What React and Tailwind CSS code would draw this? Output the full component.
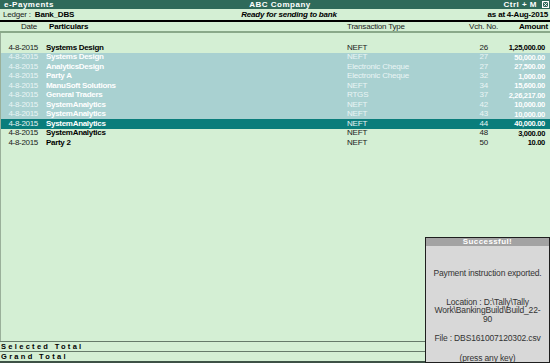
import React from 'react';

const rows = [
  { date: '4-8-2015', name: 'Systems Design', type: 'NEFT', vch: '26', amount: '1,25,000.00', state: 'normal' },
  { date: '4-8-2015', name: 'Systems Design', type: 'NEFT', vch: '27', amount: '50,000.00', state: 'selected' },
  { date: '4-8-2015', name: 'AnalyticsDesign', type: 'Electronic Cheque', vch: '27', amount: '27,500.00', state: 'selected' },
  { date: '4-8-2015', name: 'Party A', type: 'Electronic Cheque', vch: '32', amount: '1,000.00', state: 'selected' },
  { date: '4-8-2015', name: 'ManuSoft Solutions', type: 'NEFT', vch: '34', amount: '15,600.00', state: 'selected' },
  { date: '4-8-2015', name: 'General Traders', type: 'RTGS', vch: '37', amount: '2,26,217.00', state: 'selected' },
  { date: '4-8-2015', name: 'SystemAnalytics', type: 'NEFT', vch: '42', amount: '10,000.00', state: 'selected' },
  { date: '4-8-2015', name: 'SystemAnalytics', type: 'NEFT', vch: '43', amount: '10,000.00', state: 'selected' },
  { date: '4-8-2015', name: 'SystemAnalytics', type: 'NEFT', vch: '44', amount: '40,000.00', state: 'current' },
  { date: '4-8-2015', name: 'SystemAnalytics', type: 'NEFT', vch: '48', amount: '3,000.00', state: 'normal' },
  { date: '4-8-2015', name: 'Party 2', type: 'NEFT', vch: '50', amount: '10.00', state: 'normal' },
];

const rowStyles = {
  normal: { row: '', light: 'text-[#1a1a1a]', strong: 'text-black' },
  selected: { row: 'bg-[#a9d1d1]', light: 'text-[#e9f5f5]', strong: 'text-white' },
  current: { row: 'bg-[#0a7d7b]', light: 'text-[#e6f4f4]', strong: 'text-white' },
};

const Row = ({ item }) => {
  const s = rowStyles[item.state];
  return (
    <div className={`flex items-center h-[9.5px] ${s.row}`}>
      <span className={`w-[37px] text-right tracking-[-0.3px] ${s.light}`}>{item.date}</span>
      <span className={`w-[309px] pl-[8px] font-bold tracking-[-0.3px] ${s.strong}`}>{item.name}</span>
      <span className={`w-[110px] tracking-[-0.2px] ${s.light}`}>{item.type}</span>
      <span className={`w-[31px] text-right tracking-[-0.2px] ${s.light}`}>{item.vch}</span>
      <span className={`flex-1 text-right pr-[5px] font-bold text-[7.5px] tracking-[-0.3px] ${s.strong}`}>{item.amount}</span>
    </div>
  );
};

export default function App() {
  return (
    <div className="relative w-[550px] h-[363px] overflow-hidden bg-[#d4efd4] flex flex-col font-['Liberation_Sans',Arial,sans-serif] text-[8px] leading-none text-[#1a1a1a]">
      {/* title bar */}
      <div className="h-[9px] bg-[#2f6a5a] text-white font-bold flex items-center tracking-[0.5px]">
        <span className="w-[140px] pl-[4px]">e-Payments</span>
        <span className="flex-1 text-center">ABC Company</span>
        <span className="w-[130px] flex items-center justify-end pr-[1px] gap-[5px]">
          <span>Ctrl + M</span>
          <span className="w-[7px] h-[7px] border border-white flex items-center justify-center">
            <svg viewBox="0 0 6 6" className="w-[5px] h-[5px]">
              <path d="M0.5 0.5 L5.5 5.5 M5.5 0.5 L0.5 5.5" stroke="white" strokeWidth="1" />
            </svg>
          </span>
        </span>
      </div>

      {/* ledger row */}
      <div className="h-[13px] border-b-2 border-black flex items-center tracking-[-0.2px]">
        <span className="w-[150px] pl-[3px]">
          Ledger :&nbsp; <span className="font-bold text-black">Bank_DBS</span>
        </span>
        <span className="flex-1 text-center font-bold italic text-black">Ready for sending to bank</span>
        <span className="w-[122px] text-right pr-[2px] font-bold text-black">as at 4-Aug-2015</span>
      </div>

      {/* column header */}
      <div className="h-[11px] border-b-2 border-[#8aa98a] flex items-center pt-[1px] tracking-[-0.2px]">
        <span className="w-[37px] text-right">Date</span>
        <span className="w-[309px] pl-[12px] font-bold text-black">Particulars</span>
        <span className="w-[123px] pl-[1px]">Transaction Type</span>
        <span className="w-[34px]">Vch. No.</span>
        <span className="flex-1 text-right pr-[2px] font-bold text-black">Amount</span>
      </div>

      {/* entries */}
      <div className="flex-1 pt-[10px] border-l border-[#9ab09a]">
        {rows.map((item, i) => (
          <Row key={i} item={item} />
        ))}
      </div>

      {/* totals */}
      <div className="border-t border-[#667a6a] h-[10px] flex items-center pl-[1px] font-bold text-[7.5px] tracking-[2.3px] text-black">
        Selected Total
      </div>
      <div className="border-t border-[#667a6a] border-b-2 border-b-[#3d5246] h-[12px] flex items-center pl-[1px] font-bold text-[7.5px] tracking-[2.3px] text-black">
        Grand Total
      </div>

      {/* message box */}
      <div className="absolute left-[425px] top-[237px] right-0 bottom-0 border border-[#1e1e1e] bg-[#d8d8d8] flex flex-col text-[#333] text-center text-[8.5px]">
        <div className="h-[10px] bg-[#a3a3a3] text-white font-bold text-[8px] flex items-center justify-center tracking-[0.4px]">
          Successful!
        </div>
        <div className="flex flex-col items-center leading-[8.5px] tracking-[-0.15px]">
          <p className="mt-[23px]">Payment instruction exported.</p>
          <p className="mt-[20px]">
            Location : D:\Tally\Tally
            <br />
            Work\BankingBuild\Build_22-
            <br />
            90
          </p>
          <p className="mt-[11px]">File : DBS161007120302.csv</p>
          <p className="mt-[11px]">(press any key)</p>
        </div>
      </div>
    </div>
  );
}
